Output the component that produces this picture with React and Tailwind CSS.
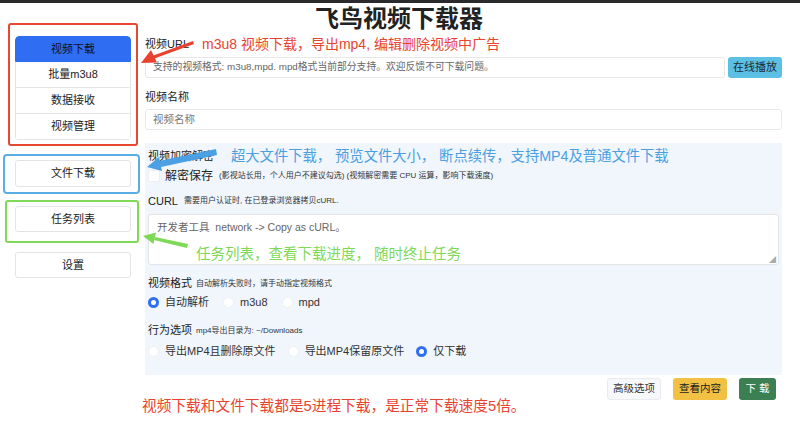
import React from "react";

const SideButton = ({ label, active, className = "" }) => (
  <div
    className={`flex items-center justify-center h-[26px] text-[11px] border ${
      active ? "bg-[#2f6ef3] border-[#2f6ef3] text-[#111]" : "bg-white border-[#e4e4e4] text-[#222]"
    } ${className}`}
  >
    {label}
  </div>
);

const Radio = ({ checked }) =>
  checked ? (
    <span className="w-[11px] h-[11px] rounded-full bg-[#2f6ef3] flex items-center justify-center shrink-0">
      <span className="w-[5px] h-[5px] rounded-full bg-white" />
    </span>
  ) : (
    <span className="w-[11px] h-[11px] rounded-full bg-white border border-[#eef0f3] shrink-0" />
  );

const RadioItem = ({ label, checked, className = "" }) => (
  <div className={`flex items-center gap-[6px] ${className}`}>
    <Radio checked={checked} />
    <span className="text-[11px] text-[#333]">{label}</span>
  </div>
);

export default function App() {
  return (
    <div className="relative w-[800px] h-[427px] overflow-hidden bg-white text-[#222] font-['Liberation_Sans','Noto_Sans_CJK_SC',sans-serif]">
      {/* top bar */}
      <div className="h-[3px] bg-[#2a2a2c]" />

      <div className="flex">
        {/* Sidebar */}
        <div className="w-[142px] flex flex-col">
          <div className="mt-[20px] ml-[8px] w-[130px] h-[123px] border-2 border-[#e6492f] rounded-[3px] pt-[11px] px-[5px]">
            <div className="rounded-[4px] overflow-hidden">
              <SideButton label="视频下载" active className="rounded-t-[4px]" />
              <SideButton label="批量m3u8" className="border-t-0" />
              <SideButton label="数据接收" className="border-t-0" />
              <SideButton label="视频管理" className="border-t-0" />
            </div>
          </div>

          <div className="mt-[8px] ml-[3px] w-[137px] h-[40px] border-2 border-[#5aaee6] rounded-[4px] pt-[4px] pl-[10px]">
            <SideButton label="文件下载" className="w-[116px] h-[27px] rounded-[3px]" />
          </div>

          <div className="mt-[6px] ml-[5px] w-[134px] h-[43px] border-2 border-[#80da57] rounded-[3px] pt-[4px] pl-[8px]">
            <SideButton label="任务列表" className="w-[116px] rounded-[3px]" />
          </div>

          <SideButton label="设置" className="mt-[9px] ml-[15px] w-[116px] rounded-[3px]" />
        </div>

        {/* Main */}
        <div className="ml-[3px] w-[637px] flex flex-col">
          <h1 className="mt-[2px] h-[28px] leading-[28px] pl-[170px] text-[24px] font-bold text-[#222]">
            飞鸟视频下载器
          </h1>

          <div className="mt-[3px] h-[16px] leading-[16px] flex items-center">
            <span className="text-[11px]">视频URL</span>
            <span className="ml-[13px] text-[14px] text-[#e8432f]">m3u8 视频下载，导出mp4, 编辑删除视频中广告</span>
          </div>

          <div className="mt-[5px] flex h-[21px]">
            <div className="w-[580px] border border-[#e8e8e8] rounded-[3px] flex items-center pl-[7px] text-[9.8px] text-[#666]">
              支持的视频格式: m3u8,mpd. mpd格式当前部分支持。欢迎反馈不可下载问题。
            </div>
            <div className="ml-[3px] w-[54px] bg-[#5bc0e3] rounded-[3px] flex items-center justify-center text-[11px] text-[#1d2a33]">
              在线播放
            </div>
          </div>

          <div className="mt-[11px] h-[16px] leading-[16px] text-[11px]">视频名称</div>
          <div className="mt-[4px] h-[21px] border border-[#e8e8e8] rounded-[3px] flex items-center pl-[7px] text-[10.5px] text-[#777]">
            视频名称
          </div>

          {/* Panel */}
          <div className="mt-[13px] h-[232px] bg-[#f0f6fc] pl-[3px] pr-[3px] pt-[5px] flex flex-col">
            <div className="h-[16px] leading-[16px] flex items-center">
              <span className="text-[11px]">视频加密解密</span>
              <span className="ml-[17px] text-[14.3px] text-[#4b9fe3]">
                超大文件下载， 预览文件大小， 断点续传，支持MP4及普通文件下载
              </span>
            </div>

            <div className="mt-[4px] h-[16px] flex items-center">
              <span className="w-[12px] h-[12px] bg-white border border-[#eceef1] rounded-[2px]" />
              <span className="ml-[5px] text-[12px] text-[#222]">解密保存</span>
              <span className="ml-[6px] text-[8px] text-[#333]">
                (影视站长用，个人用户不建议勾选) (视频解密需要 CPU 运算，影响下载速度)
              </span>
            </div>

            <div className="mt-[9px] h-[16px] flex items-center">
              <span className="text-[11px]">CURL</span>
              <span className="ml-[6px] text-[8px] text-[#333]">需要用户认证时, 在已登录浏览器拷贝cURL.</span>
            </div>

            <div className="mt-[5px] h-[51px] bg-white border border-[#e4e4e4] rounded-[3px] pl-[8px] pt-[5px] relative">
              <div className="text-[10.5px] text-[#666]">开发者工具&nbsp;&nbsp;network -&gt; Copy as cURL。</div>
              <div className="mt-[8px] ml-[39px] text-[14.5px] text-[#7ed957]">任务列表，查看下载进度， 随时终止任务</div>
              <span className="absolute right-[2px] bottom-[1px] text-[7px] text-[#aaa] leading-none">◢</span>
            </div>

            <div className="mt-[10px] h-[16px] flex items-end">
              <span className="text-[11px] leading-[16px]">视频格式</span>
              <span className="ml-[4px] text-[8px] leading-[14px] text-[#333]">自动解析失败时，请手动指定视频格式</span>
            </div>

            <div className="mt-[4px] h-[14px] flex items-center">
              <RadioItem label="自动解析" checked />
              <RadioItem label="m3u8" className="ml-[14px]" />
              <RadioItem label="mpd" className="ml-[14px]" />
            </div>

            <div className="mt-[13px] h-[16px] flex items-end">
              <span className="text-[11px] leading-[16px]">行为选项</span>
              <span className="ml-[4px] text-[8px] leading-[14px] text-[#333]">mp4导出目录为: ~/Downloads</span>
            </div>

            <div className="mt-[6px] h-[14px] flex items-center">
              <RadioItem label="导出MP4且删除原文件" />
              <RadioItem label="导出MP4保留原文件" className="ml-[12px]" />
              <RadioItem label="仅下载" checked className="ml-[12px]" />
            </div>
          </div>

          {/* Bottom row */}
          <div className="mt-[3px] flex items-start">
            <div className="mt-[17px] -ml-[3px] text-[14.7px] text-[#e8432f]">
              视频下载和文件下载都是5进程下载，是正常下载速度5倍。
            </div>
            <div className="ml-auto mr-[6px] flex gap-[12px]">
              <div className="w-[54px] h-[22px] rounded-[3px] bg-[#f7f8fa] border border-[#e9ebee] flex items-center justify-center text-[10.5px] text-[#333]">
                高级选项
              </div>
              <div className="w-[54px] h-[22px] rounded-[3px] bg-[#f2c144] flex items-center justify-center text-[10.5px] text-[#222]">
                查看内容
              </div>
              <div className="w-[37px] h-[22px] rounded-[3px] bg-[#3c7f52] flex items-center justify-center text-[10.5px] text-white">
                下 载
              </div>
            </div>
          </div>
        </div>
      </div>

      {/* annotation arrows */}
      <svg className="absolute inset-0 pointer-events-none" width="800" height="427" viewBox="0 0 800 427">
        <polygon points="193,41 194,44 153,59 152,56" fill="#e8432f" />
        <polygon points="141,63 157,62.5 151,50" fill="#e8432f" />
        <polygon points="216,149 217,155 161,167 159,161" fill="#4b9fe3" />
        <polygon points="147,167 162,171 159,157" fill="#4b9fe3" />
        <polygon points="188,244 187,248 154,240 155,237" fill="#7ed957" />
        <polygon points="143,236 153.5,244 156,232.5" fill="#7ed957" />
      </svg>
    </div>
  );
}
